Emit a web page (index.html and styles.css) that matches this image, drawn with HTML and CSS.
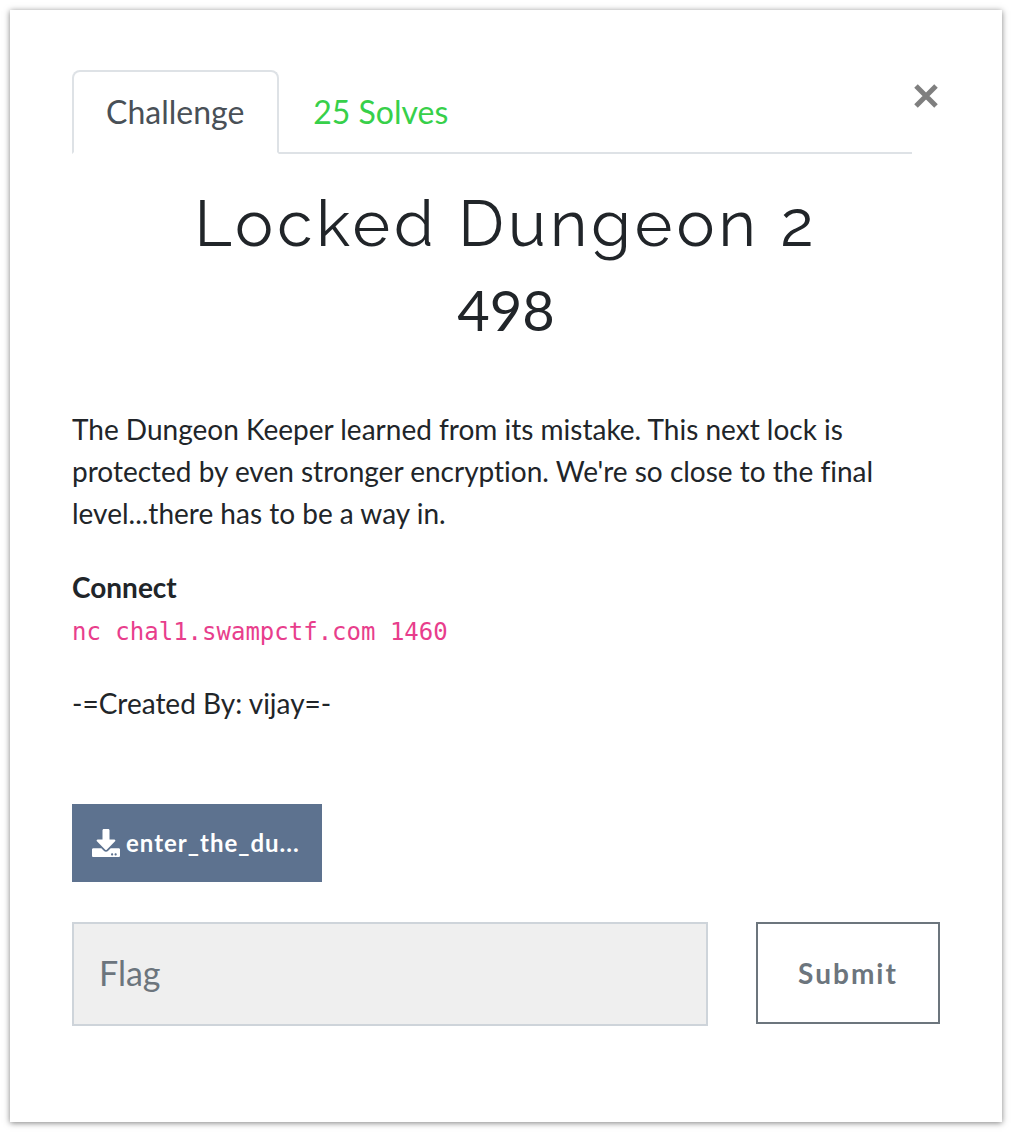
FILE: index.html
```html
<!DOCTYPE html>
<html lang="en">
<head>
<meta charset="utf-8">
<meta name="viewport" content="width=device-width, initial-scale=1">
<title>Locked Dungeon 2</title>
<link rel="stylesheet" href="styles.css">
</head>
<body>
<main class="modal">
  <header class="top">
    <nav class="tabs">
      <a class="tab tab-active" href="#challenge">Challenge</a>
      <a class="tab tab-solves" href="#solves">25 Solves</a>
    </nav>
    <button class="close" type="button" aria-label="Close">
      <svg class="close-icon" viewBox="0 0 24 24" aria-hidden="true"><path d="M2 2L22 22M22 2L2 22"/></svg>
    </button>
  </header>
  <section id="challenge">
    <h1 class="title">Locked Dungeon 2</h1>
    <p class="points">498</p>
    <div class="description">
      <p>The Dungeon Keeper learned from its mistake. This next lock is protected by even stronger encryption. We're so close to the final level...there has to be a way in.</p>
      <p><strong>Connect</strong><br><code>nc chal1.swampctf.com 1460</code></p>
      <p>-=Created By: vijay=-</p>
    </div>
    <a class="file" href="#file">
      <svg class="file-icon" viewBox="0 0 512 512" aria-hidden="true"><path d="M216 0h80c13.300 0 24 10.700 24 24v168h87.700c17.800 0 26.700 21.500 14.100 34.100L269.700 378.300c-7.500 7.500-19.800 7.500-27.300 0L90.100 226.100c-12.600-12.600-3.700-34.100 14.100-34.100H192V24c0-13.300 10.700-24 24-24zm296 376v112c0 13.300-10.700 24-24 24H24c-13.300 0-24-10.700-24-24V376c0-13.300 10.700-24 24-24h146.700l49 49c20.100 20.100 52.500 20.100 72.600 0l49-49H488c13.300 0 24 10.700 24 24zm-124 88c0-11-9-20-20-20s-20 9-20 20 9 20 20 20 20-9 20-20zm64 0c0-11-9-20-20-20s-20 9-20 20 9 20 20 20 20-9 20-20z"/></svg>
      <span>enter_the_du...</span>
    </a>
    <form class="answer">
      <input class="flag" type="text" placeholder="Flag" aria-label="Flag">
      <button class="submit" type="button">Submit</button>
    </form>
  </section>
</main>
</body>
</html>
```
FILE: styles.css
```css
* {
  box-sizing: border-box;
}

body {
  margin: 0;
  padding: 10px;
  background: #fff;
  color: #212529;
  font: 28px/42px Lato, "Liberation Sans", sans-serif;
}

.modal {
  padding: 60px 62px 96px;
  background: #fff;
  box-shadow: 0 1px 6px rgba(0, 0, 0, 0.5);
}

.top {
  display: flex;
  align-items: flex-start;
}

.tabs {
  display: flex;
  flex: 1;
  border-bottom: 2px solid #dee2e6;
}

.tab {
  padding: 16px 33px 16px 32px;
  margin-bottom: -2px;
  border: 2px solid transparent;
  border-radius: 8px 8px 0 0;
  font-size: 32px;
  line-height: 48px;
  text-decoration: none;
}

.tab-active {
  border-color: #dee2e6 #dee2e6 #fff;
  background: #fff;
  color: #495057;
}

.tab-solves {
  color: #37d04a;
}

.close {
  display: flex;
  padding: 14px 2px;
  border: 0;
  background: none;
}

.close-icon {
  width: 24px;
  height: 24px;
  fill: none;
  stroke: #7f7f7f;
  stroke-width: 5;
}

.title {
  margin: 32px 0 0;
  font: 400 64px/76px Raleway, "Open Sans", sans-serif;
  letter-spacing: 4px;
  text-align: center;
}

.points {
  margin: 14px 0 64px;
  font-size: 56px;
  line-height: 68px;
  text-align: center;
}

.description p {
  margin: 0 0 32px;
}

.description {
  font-variant-ligatures: no-common-ligatures;
}

code {
  color: #e83e8c;
  font: 24px/24px "DejaVu Sans Mono", monospace;
}

.file {
  display: inline-flex;
  align-items: center;
  gap: 6px;
  width: 250px;
  height: 78px;
  margin-top: 48px;
  padding: 0 20px;
  background: #5d728f;
  color: #fff;
  font-size: 24px;
  font-weight: 700;
  letter-spacing: 1px;
  text-decoration: none;
  white-space: nowrap;
}

.file-icon {
  flex: none;
  width: 28px;
  height: 28px;
  fill: #fff;
}

.answer {
  display: flex;
  align-items: flex-start;
  gap: 48px;
  margin-top: 40px;
}

.flag {
  flex: 1;
  min-width: 0;
  height: 104px;
  padding: 0 25px 4px;
  border: 2px solid #ced4da;
  border-radius: 0;
  background: #efefef;
  color: #495057;
  font: 34px/48px Lato, sans-serif;
}

.flag::placeholder {
  color: #6c757d;
}

.submit {
  width: 184px;
  height: 102px;
  border: 2px solid #6c757d;
  background: #fff;
  color: #6c757d;
  font: 700 28px/42px Lato, sans-serif;
  letter-spacing: 2px;
}
```
